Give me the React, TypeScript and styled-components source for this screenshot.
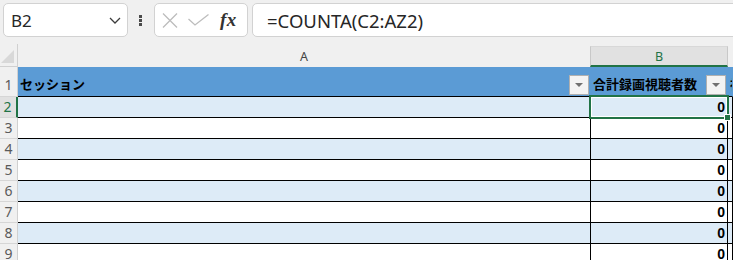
import React from "react";
import styled, { createGlobalStyle, css } from "styled-components";

const GlobalStyle = createGlobalStyle`
  html, body { margin: 0; padding: 0; background: #f0f0f0; overflow: hidden; }
  body { font-family: "Noto Sans", "Noto Sans CJK JP", sans-serif; }
  * { box-sizing: border-box; }
`;

const Page = styled.div`
  width: 733px;
  height: 260px;
  overflow: hidden;
  background: #f0f0f0;
`;

const Toolbar = styled.div`
  display: flex;
  align-items: flex-start;
  height: 38px;
  padding: 3px 0 0 3px;
  width: 800px;
`;

const Box = styled.div`
  height: 34px;
  background: #ffffff;
  border: 1px solid #d2d2d2;
  border-radius: 5px;
  display: flex;
  align-items: center;
`;

const NameBox = styled(Box)`
  width: 125px;
  padding: 0 6px 0 7px;
  justify-content: space-between;
  font-size: 17px;
  color: #262626;
`;

const Dots = styled.div`
  width: 26px;
  height: 34px;
  display: flex;
  flex-direction: column;
  align-items: center;
  justify-content: center;
  gap: 1px;
  padding-right: 1px;
`;

const Dot = styled.span`
  width: 3px;
  height: 3px;
  background: #4a4a4a;
`;

const FxBox = styled(Box)`
  width: 94px;
  padding: 0 6px 0 7px;
  gap: 10px;
`;

const Fx = styled.span`
  font-family: "Liberation Serif", "DejaVu Serif", serif;
  font-style: italic;
  font-weight: bold;
  font-size: 19px;
  color: #333333;
  margin-left: 1px;
  letter-spacing: 0.5px;
`;

const FormulaBox = styled(Box)`
  flex: 1;
  margin-left: 4px;
  padding-left: 14px;
  font-size: 18.5px;
  color: #262626;
`;

const HeaderRow = styled.div`
  display: flex;
  height: 23px;
  margin-top: 6px;
`;

const Corner = styled.div`
  width: 18px;
  flex: none;
  border-right: 1px solid #d0d0d0;
  border-bottom: 1px solid #d0d0d0;
  display: flex;
  align-items: flex-end;
  padding: 0 0 2px 1px;
`;

const ColHeader = styled.div<{ $w?: number; $active?: boolean }>`
  width: ${(p) => (p.$w ? `${p.$w}px` : "auto")};
  flex: ${(p) => (p.$w ? "none" : "1")};
  display: flex;
  align-items: center;
  justify-content: center;
  font-size: 12.5px;
  color: #444444;
  padding-top: 1px;
  ${(p) =>
    p.$active &&
    css`
      margin-top: 2px;
      background: #e1e1e1;
      border: 1px solid #c8c8c8;
      border-top-color: #d8d8d8;
      border-bottom: 2px solid #217346;
      color: #217346;
      padding-top: 0;
    `}
`;

const Row = styled.div<{ $h: number }>`
  display: flex;
  height: ${(p) => p.$h}px;
`;

const RowHeader = styled.div<{ $active?: boolean; $bottom?: boolean }>`
  width: 18px;
  flex: none;
  border-right: 1px solid #d0d0d0;
  border-bottom: 1px solid #d6d6d6;
  display: flex;
  justify-content: center;
  align-items: ${(p) => (p.$bottom ? "flex-end" : "center")};
  padding-bottom: ${(p) => (p.$bottom ? "2px" : "0")};
  font-size: 14px;
  line-height: 18px;
  color: #5a5a5a;
  ${(p) =>
    p.$active &&
    css`
      background: #e1e1e1;
      border-right: 2px solid #217346;
      color: #217346;
      padding-right: 1px;
    `}
`;

type Tone = "head" | "band" | "plain";
const toneBg: Record<Tone, string> = {
  head: "#5b9bd5",
  band: "#ddebf7",
  plain: "#ffffff",
};

const Cell = styled.div<{ $w?: number; $tone: Tone }>`
  position: relative;
  width: ${(p) => (p.$w ? `${p.$w}px` : "auto")};
  flex: ${(p) => (p.$w ? "none" : "1")};
  background: ${(p) => toneBg[p.$tone]};
  border-bottom: 1px solid #000000;
  border-right: 1px solid ${(p) => (p.$tone === "head" ? "#5b9bd5" : "#000000")};
  display: flex;
  align-items: ${(p) => (p.$tone === "head" ? "flex-end" : "center")};
  overflow: hidden;
  white-space: nowrap;
`;

const HeadLabel = styled.span`
  flex: 1;
  font-family: "Noto Sans CJK JP", sans-serif;
  font-weight: bold;
  font-size: 13px;
  line-height: 18px;
  color: #000000;
  padding: 0 0 3px 2px;
  overflow: hidden;
`;

const FilterButton = styled.div`
  width: 20px;
  height: 20px;
  flex: none;
  margin: 0 1px 1px 0;
  background: #f3f3f3;
  border: 1px solid #b0b0b0;
  display: flex;
  align-items: center;
  justify-content: center;
  &::after {
    content: "";
    border-left: 4px solid transparent;
    border-right: 4px solid transparent;
    border-top: 4px solid #707070;
  }
`;

const Value = styled.span`
  flex: 1;
  text-align: right;
  padding-right: 2px;
  font-family: "Liberation Sans", Arial, sans-serif;
  font-weight: bold;
  font-size: 14px;
  color: #000000;
`;

const Selection = styled.div`
  position: absolute;
  left: -2px;
  top: -2px;
  width: 140px;
  height: 24px;
  border: 2px solid #217346;
  box-shadow: inset 0 0 0 1px #ffffff;
  pointer-events: none;
  z-index: 3;
`;

const Handle = styled.div`
  position: absolute;
  left: 133px;
  top: 17px;
  width: 7px;
  height: 7px;
  background: #217346;
  border: 1px solid #ffffff;
`;

const SelCell = styled(Cell)`
  overflow: visible;
  z-index: 3;
`;

const ChevronIcon = () => (
  <svg width="12" height="7" viewBox="0 0 12 7">
    <path d="M1 1 L6 6 L11 1" fill="none" stroke="#3c3c3c" strokeWidth="1.3" />
  </svg>
);

const CancelIcon = () => (
  <svg width="16" height="15" viewBox="0 0 16 15">
    <path d="M1 0.5 L15 14.5 M15 0.5 L1 14.5" fill="none" stroke="#bdbdbd" strokeWidth="1.3" />
  </svg>
);

const CheckIcon = () => (
  <svg width="21" height="12" viewBox="0 0 21 12">
    <path d="M0.5 5 L7 11 L20.5 0.5" fill="none" stroke="#bdbdbd" strokeWidth="1.3" />
  </svg>
);

const CornerTriangle = () => (
  <svg width="14" height="14" viewBox="0 0 14 14">
    <polygon points="13,0 13,13 0,13" fill="#d8d8d8" />
  </svg>
);

const rows = [2, 3, 4, 5, 6, 7, 8, 9];

export default function App() {
  return (
    <Page>
      <GlobalStyle />
      <Toolbar>
        <NameBox>
          <span>B2</span>
          <ChevronIcon />
        </NameBox>
        <Dots>
          <Dot />
          <Dot />
          <Dot />
        </Dots>
        <FxBox>
          <CancelIcon />
          <CheckIcon />
          <Fx>fx</Fx>
        </FxBox>
        <FormulaBox>=COUNTA(C2:AZ2)</FormulaBox>
      </Toolbar>
      <HeaderRow>
        <Corner>
          <CornerTriangle />
        </Corner>
        <ColHeader $w={572}>A</ColHeader>
        <ColHeader $w={138} $active>
          B
        </ColHeader>
        <ColHeader />
      </HeaderRow>
      <Row $h={30}>
        <RowHeader $bottom>1</RowHeader>
        <Cell $w={573} $tone="head">
          <HeadLabel>セッション</HeadLabel>
          <FilterButton />
        </Cell>
        <Cell $w={137} $tone="head">
          <HeadLabel>合計録画視聴者数</HeadLabel>
          <FilterButton />
        </Cell>
        <Cell $tone="head">
          <HeadLabel>視聴</HeadLabel>
        </Cell>
      </Row>
      {rows.map((n) => {
        const tone: Tone = n % 2 === 0 ? "band" : "plain";
        return (
          <Row key={n} $h={21}>
            <RowHeader $active={n === 2}>{n}</RowHeader>
            <Cell $w={573} $tone={tone} />
            {n === 2 ? (
              <SelCell $w={137} $tone={tone}>
                <Value>0</Value>
                <Selection>
                  <Handle />
                </Selection>
              </SelCell>
            ) : (
              <Cell $w={137} $tone={tone}>
                <Value>0</Value>
              </Cell>
            )}
            <Cell $tone={tone} />
          </Row>
        );
      })}
    </Page>
  );
}
